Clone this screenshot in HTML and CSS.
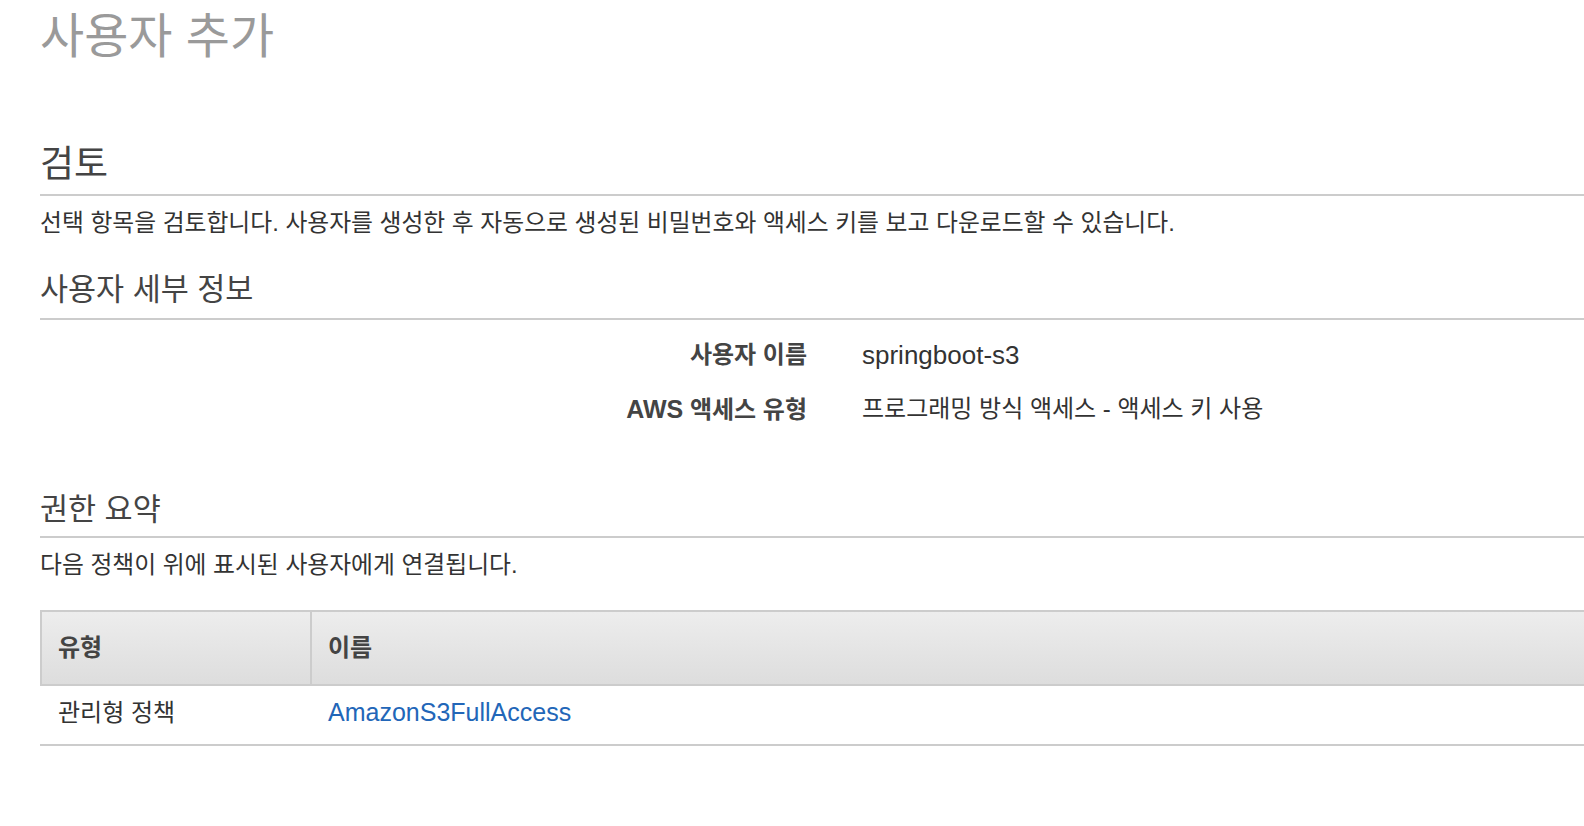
FILE: index.html
```html
<!DOCTYPE html>
<html lang="ko">
<head>
<meta charset="utf-8">
<title>사용자 추가</title>
<link rel="stylesheet" href="styles.css">
</head>
<body>
<main class="page">
  <h1 class="page-title">사용자 추가</h1>

  <h2 class="step-heading">검토</h2>
  <p class="desc desc-review">선택 항목을 검토합니다. 사용자를 생성한 후 자동으로 생성된 비밀번호와 액세스 키를 보고 다운로드할 수 있습니다.</p>

  <h3 class="section-heading section-details">사용자 세부 정보</h3>
  <dl class="details">
    <dt class="detail-label">사용자 이름</dt>
    <dd class="detail-value"><span class="latin latin-value">springboot-s3</span></dd>
    <dt class="detail-label"><span class="latin">AWS</span> 액세스 유형</dt>
    <dd class="detail-value">프로그래밍 방식 액세스 - 액세스 키 사용</dd>
  </dl>

  <h3 class="section-heading section-perms">권한 요약</h3>
  <p class="desc desc-perms">다음 정책이 위에 표시된 사용자에게 연결됩니다.</p>

  <table class="policy-table">
    <thead>
      <tr>
        <th class="col-type">유형</th>
        <th class="col-name">이름</th>
      </tr>
    </thead>
    <tbody>
      <tr>
        <td class="cell-type">관리형 정책</td>
        <td class="cell-name"><a class="policy-link latin" href="#">AmazonS3FullAccess</a></td>
      </tr>
    </tbody>
  </table>
</main>
</body>
</html>
```
FILE: styles.css
```css
html, body {
  margin: 0;
  padding: 0;
  background: #ffffff;
}

body {
  font-family: "Liberation Sans", "Noto Sans CJK KR", sans-serif;
  color: #444444;
  overflow: hidden;
}

.page {
  padding: 11px 0 0 40px;
}

.page-title {
  margin: 0;
  font-size: 48px;
  line-height: 52px;
  font-weight: normal;
  color: #9a9a9a;
}

.step-heading {
  margin: 80px 0 0 0;
  padding-bottom: 7px;
  font-size: 37px;
  line-height: 44px;
  font-weight: normal;
  color: #444444;
  border-bottom: 2px solid #cccccc;
}

.desc {
  margin: 12px 0 0 0;
  font-size: 23.8px;
  line-height: 30px;
  color: #333333;
}

.section-heading {
  margin: 0;
  font-size: 30.5px;
  line-height: 40px;
  font-weight: normal;
  color: #444444;
  border-bottom: 2px solid #cccccc;
}

.section-details {
  margin-top: 31px;
  padding-bottom: 9px;
}

.section-perms {
  margin-top: 64px;
  padding-bottom: 7px;
}

.details {
  margin: 20px 0 0 0;
  display: grid;
  grid-template-columns: 767px 1fr;
  column-gap: 55px;
  row-gap: 23px;
}

.detail-label {
  margin: 0;
  text-align: right;
  font-size: 24px;
  line-height: 30px;
  font-weight: bold;
  color: #444444;
}

.detail-value {
  margin: 0;
  font-size: 24px;
  line-height: 30px;
  color: #333333;
}

.latin {
  font-size: 25px;
}

.latin-value {
  font-size: 26px;
}

.policy-table {
  margin-top: 30px;
  width: 100%;
  border-collapse: separate;
  border-spacing: 0;
  table-layout: fixed;
}

.policy-table th {
  box-sizing: border-box;
  text-align: left;
  font-size: 24px;
  line-height: 30px;
  font-weight: bold;
  color: #444444;
  background: linear-gradient(#ededed, #dddddd);
  border-top: 2px solid #cccccc;
  border-bottom: 2px solid #cccccc;
  border-left: 2px solid #cccccc;
  padding: 21px 0 21px 16px;
}

.policy-table th.col-type {
  width: 270px;
  padding-left: 16px;
}

.policy-table td {
  text-align: left;
  font-size: 24px;
  line-height: 30px;
  color: #333333;
  border-bottom: 2px solid #cccccc;
  padding: 11px 0 16px 18px;
}

.policy-table td.cell-type {
  padding-left: 18px;
}

.policy-link {
  color: #2266b8;
  text-decoration: none;
}
```
